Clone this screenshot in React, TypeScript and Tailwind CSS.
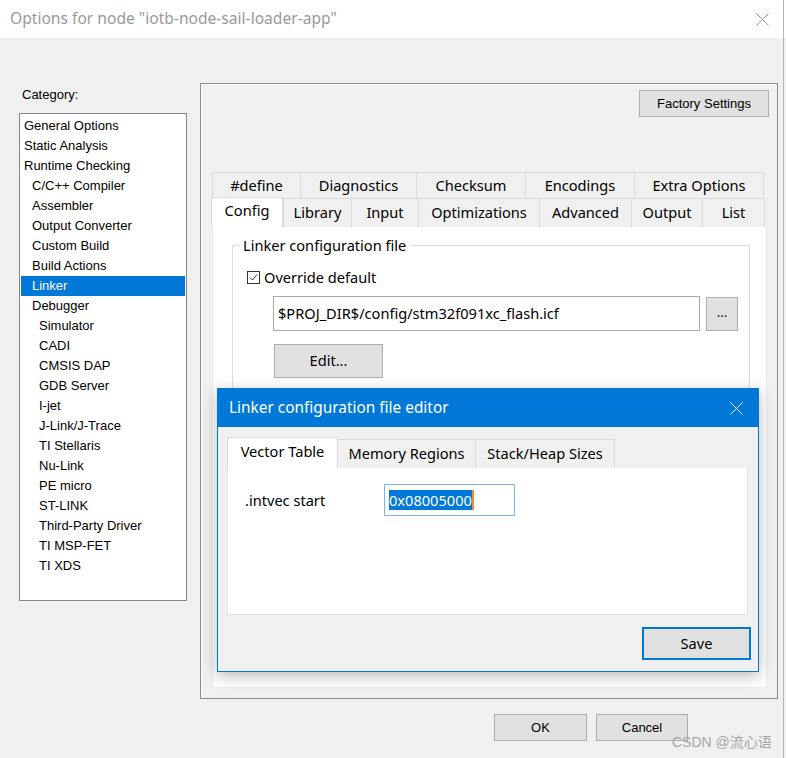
import React from 'react';

const CATEGORIES: { label: string; indent: number; selected?: boolean }[] = [
    { label: 'General Options', indent: 0 },
    { label: 'Static Analysis', indent: 0 },
    { label: 'Runtime Checking', indent: 0 },
    { label: 'C/C++ Compiler', indent: 1 },
    { label: 'Assembler', indent: 1 },
    { label: 'Output Converter', indent: 1 },
    { label: 'Custom Build', indent: 1 },
    { label: 'Build Actions', indent: 1 },
    { label: 'Linker', indent: 1, selected: true },
    { label: 'Debugger', indent: 1 },
    { label: 'Simulator', indent: 2 },
    { label: 'CADI', indent: 2 },
    { label: 'CMSIS DAP', indent: 2 },
    { label: 'GDB Server', indent: 2 },
    { label: 'I-jet', indent: 2 },
    { label: 'J-Link/J-Trace', indent: 2 },
    { label: 'TI Stellaris', indent: 2 },
    { label: 'Nu-Link', indent: 2 },
    { label: 'PE micro', indent: 2 },
    { label: 'ST-LINK', indent: 2 },
    { label: 'Third-Party Driver', indent: 2 },
    { label: 'TI MSP-FET', indent: 2 },
    { label: 'TI XDS', indent: 2 },
];

const INDENT = ['pl-[3px]', 'pl-[11px]', 'pl-[18px]'];

const TOP_TABS = [
    { label: '#define', w: 'w-[88px]' },
    { label: 'Diagnostics', w: 'w-[116px]' },
    { label: 'Checksum', w: 'w-[109px]' },
    { label: 'Encodings', w: 'w-[109px]' },
    { label: 'Extra Options', w: 'w-[130px]' },
];

const BOTTOM_TABS = [
    { label: 'Library', w: 'w-[68px]' },
    { label: 'Input', w: 'w-[67px]' },
    { label: 'Optimizations', w: 'w-[121px]' },
    { label: 'Advanced', w: 'w-[92px]' },
    { label: 'Output', w: 'w-[71px]' },
    { label: 'List', w: 'w-[63px]' },
];

const SEGOE = "font-['Noto_Sans',_'Open_Sans',_sans-serif]";
const TAHOMA = "font-['Liberation_Sans',_Arial,_sans-serif]";

const CloseIcon = ({ color }: { color: string }) => (
    <svg width="13" height="13" viewBox="0 0 13 13">
        <path d="M0.5 0.5 L12.5 12.5 M12.5 0.5 L0.5 12.5" stroke={color} strokeWidth="1" fill="none" />
    </svg>
);

const WinButton = ({ label, className }: { label: string; className: string }) => (
    <button className={`bg-[#e1e1e1] border border-[#adadad] flex items-center justify-center text-black ${className}`}>
        {label}
    </button>
);

export default function App() {
    return (
        <div className="relative w-[786px] h-[758px] overflow-hidden bg-[#f0f0f0] text-black">
            {/* Title bar */}
            <div className="h-[38px] bg-white flex items-center justify-between pl-[10px] pr-[17px]">
                <span className={`${SEGOE} text-[15.6px] text-[#999999]`}>
                    Options for node "iotb-node-sail-loader-app"
                </span>
                <CloseIcon color="#999999" />
            </div>

            {/* Body */}
            <div className="flex pt-[45px] pl-[19px] gap-[13px]">
                {/* Category column */}
                <div className="w-[168px] flex flex-col">
                    <div className={`${TAHOMA} text-[13px] h-[16px] leading-[16px] mt-[4px] pl-[3px]`}>Category:</div>
                    <div className="mt-[10px] h-[488px] bg-white border border-[#828790] pt-[2px] px-[1px]">
                        {CATEGORIES.map(c => (
                            <div
                                key={c.label}
                                className={`${TAHOMA} text-[13px] h-[20px] leading-[20px] ${INDENT[c.indent]} ${
                                    c.selected ? 'bg-[#0078d7] text-white' : ''
                                }`}
                            >
                                {c.label}
                            </div>
                        ))}
                    </div>
                </div>

                {/* Right group */}
                <div className="w-[578px] h-[616px] border border-[#8a8a8a] shadow-[inset_1px_1px_0_#ffffff] flex flex-col">
                    <div className="flex justify-end pt-[6px] pr-[8px]">
                        <WinButton label="Factory Settings" className={`${TAHOMA} text-[13px] w-[130px] h-[27px]`} />
                    </div>

                    {/* Tabs */}
                    <div className={`${SEGOE} text-[14.6px] mt-[55px] ml-[11px] flex flex-col`}>
                        <div className="flex h-[27px]">
                            {TOP_TABS.map(t => (
                                <div
                                    key={t.label}
                                    className={`${t.w} border border-r-0 last:border-r border-[#d9d9d9] bg-[#f0f0f0] flex items-center justify-center`}
                                >
                                    {t.label}
                                </div>
                            ))}
                        </div>
                        <div className="flex h-[28px] items-end">
                            <div className="w-[72px] h-[30px] -ml-[1px] bg-white border border-b-0 border-[#d9d9d9] flex items-center justify-center pb-[3px] relative z-10">
                                Config
                            </div>
                            {BOTTOM_TABS.map(t => (
                                <div
                                    key={t.label}
                                    className={`${t.w} h-[28px] border-l border-b-0 last:border-r border-[#d9d9d9] bg-[#f0f0f0] flex items-center justify-center`}
                                >
                                    {t.label}
                                </div>
                            ))}
                        </div>

                        {/* Config panel */}
                        <div className="w-[555px] h-[461px] bg-white border border-t-0 border-[#ececec] pt-[18px] pl-[19px]">
                            <div className="relative w-[518px] h-[200px] border border-[#dcdcdc]">
                                <span className="absolute -top-[12px] left-[6px] bg-white px-[4px] leading-[22px]">
                                    Linker configuration file
                                </span>
                                <div className="pt-[22px] pl-[14px] flex items-center gap-[4px]">
                                    <div className="w-[13px] h-[13px] border border-[#333333] bg-white flex items-center justify-center">
                                        <svg width="9" height="9" viewBox="0 0 9 9">
                                            <path d="M1 4.5 L3.5 7 L8 1.5" stroke="#333333" strokeWidth="1" fill="none" />
                                        </svg>
                                    </div>
                                    <span className="leading-[18px]">Override default</span>
                                </div>
                                <div className="flex items-center gap-[6px] mt-[10px] ml-[40px]">
                                    <div className="w-[427px] h-[35px] border border-[#a8a8a8] bg-white flex items-center pl-[4px]">
                                        $PROJ_DIR$/config/stm32f091xc_flash.icf
                                    </div>
                                    <WinButton label="..." className="w-[32px] h-[34px] text-[13px] pb-[2px]" />
                                </div>
                                <WinButton label="Edit..." className="w-[109px] h-[34px] mt-[13px] ml-[41px]" />
                            </div>
                        </div>
                    </div>
                </div>
            </div>

            {/* Dialog buttons */}
            <div className="flex justify-end gap-[9px] mt-[15px] pr-[98px]">
                <WinButton label="OK" className={`${TAHOMA} text-[13px] w-[93px] h-[27px]`} />
                <WinButton label="Cancel" className={`${TAHOMA} text-[13px] w-[92px] h-[27px]`} />
            </div>

            {/* Window right edge */}
            <div className="absolute top-0 right-[2px] w-px h-full bg-[#b4b4b4]" />

            {/* Linker configuration file editor modal */}
            <div className={`${SEGOE} absolute left-[217px] top-[388px] w-[542px] h-[284px] border border-[#0078d7] bg-[#f0f0f0] shadow-[0_4px_14px_rgba(0,0,0,0.28)] flex flex-col`}>
                <div className="h-[38px] bg-[#0078d7] flex items-center justify-between pl-[11px] pr-[15px] text-white text-[15.4px]">
                    <span>Linker configuration file editor</span>
                    <CloseIcon color="#ffffff" />
                </div>
                <div className="pl-[9px] pr-[10px] pt-[10px] text-[14.6px]">
                    <div className="flex items-end h-[31px]">
                        <div className="w-[111px] h-[31px] bg-white border border-b-0 border-[#d9d9d9] flex items-center justify-center pb-[2px] relative z-10">
                            Vector Table
                        </div>
                        <div className="w-[138px] h-[29px] bg-[#f0f0f0] border border-l-0 border-b-0 border-[#d9d9d9] flex items-center justify-center">
                            Memory Regions
                        </div>
                        <div className="w-[139px] h-[29px] bg-[#f0f0f0] border border-l-0 border-b-0 border-[#d9d9d9] flex items-center justify-center">
                            Stack/Heap Sizes
                        </div>
                    </div>
                    <div className="h-[147px] bg-white border border-t-0 border-[#e3e3e3] pt-[16px] pl-[17px] flex items-start">
                        <span className="w-[139px] leading-[32px]">.intvec start</span>
                        <div className="w-[131px] h-[32px] border border-[#7eb4ea] bg-white flex items-center pl-[4px]">
                            <span className="bg-[#0078d7] text-white leading-[20px] border-r-2 border-[#f0883a]">0x08005000</span>
                        </div>
                    </div>
                    <div className="flex justify-end mt-[12px] -mr-[3px]">
                        <button className="w-[109px] h-[33px] bg-[#e1e1e1] border-2 border-[#0078d7] flex items-center justify-center">
                            Save
                        </button>
                    </div>
                </div>
            </div>

            {/* Watermark */}
            <div className="absolute left-[672px] top-[732px] text-[14px] leading-[20px] text-[#9a9a9a]/90 font-['Liberation_Sans',_'Noto_Sans_CJK_SC',_sans-serif]">
                CSDN @流心语
            </div>
        </div>
    );
}
